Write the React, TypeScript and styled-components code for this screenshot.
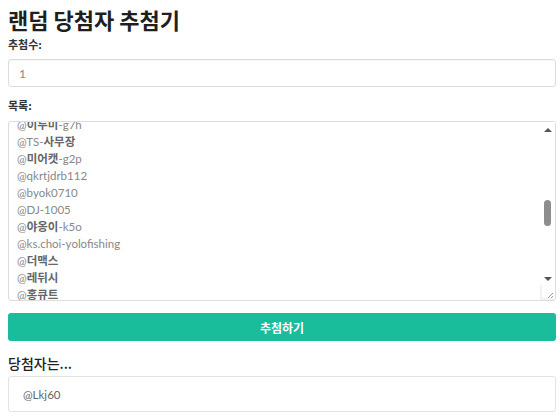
import React, { useEffect, useRef } from 'react';
import styled, { createGlobalStyle } from 'styled-components';

const GlobalStyle = createGlobalStyle`
    body {
        margin: 0;
        background: #fff;
        font-family: Lato, "Noto Sans CJK KR", sans-serif;
        color: #333;
    }
`;

const Page = styled.div`
    display: flex;
    flex-direction: column;
    padding: 6px 4px 0 8px;
`;

const Title = styled.h1`
    margin: 0;
    font-size: 22px;
    line-height: 26px;
    font-weight: 700;
    color: #1f1f1f;
    font-family: "Noto Sans CJK KR", sans-serif;
`;

const Label = styled.label<{ top: number }>`
    margin-top: ${(p) => p.top}px;
    font-size: 11px;
    line-height: 17px;
    font-weight: 700;
    color: #333;
    font-family: "Noto Sans CJK KR", sans-serif;
`;

const Input = styled.input`
    margin-top: 6px;
    height: 28px;
    box-sizing: border-box;
    border: 1px solid #ddd;
    border-radius: 3px;
    padding: 0 10px;
    font-family: Lato, "Noto Sans CJK KR", sans-serif;
    font-size: 12px;
    color: #888;
    box-shadow: inset 0 1px 1px rgba(0, 0, 0, 0.04);
    outline: none;
`;

const ListBox = styled.div`
    position: relative;
    margin-top: 7px;
    height: 180px;
    box-sizing: border-box;
    border: 1px solid #ddd;
    border-radius: 3px;
    display: flex;
`;

const List = styled.div`
    flex: 1;
    padding: 6px 8px;
    overflow: hidden;
    font-size: 11.5px;
    line-height: 17px;
    color: #888;
`;

const ScrollBar = styled.div`
    width: 15px;
    display: flex;
    flex-direction: column;
    align-items: center;
    background: #fff;
`;

const ArrowButton = styled.div<{ h: number }>`
    height: ${(p) => p.h}px;
    display: flex;
    align-items: center;
    justify-content: center;
`;

const Arrow = styled.div<{ down?: boolean }>`
    width: 0;
    height: 0;
    border-left: 4px solid transparent;
    border-right: 4px solid transparent;
    ${(p) => (p.down ? 'border-top' : 'border-bottom')}: 4px solid #555;
`;

const Track = styled.div`
    flex: 1;
    display: flex;
    flex-direction: column;
    align-items: center;
`;

const Thumb = styled.div<{ offset: number }>`
    margin-top: ${(p) => p.offset}px;
    width: 7px;
    height: 26px;
    border-radius: 4px;
    background: #8d8d8d;
`;

const Grip = styled.svg`
    width: 15px;
    height: 15px;
    display: block;
    flex-shrink: 0;
`;

const Line = styled.div`
    white-space: nowrap;
`;

const Kor = styled.span`
    font-family: "Noto Sans CJK KR", sans-serif;
    font-weight: 700;
    color: #666;
    font-size: 11.5px;
`;

const DrawButton = styled.button`
    margin-top: 12px;
    height: 28px;
    border: none;
    border-radius: 3px;
    background: #19bc9b;
    color: #fff;
    font-family: "Noto Sans CJK KR", sans-serif;
    font-weight: 700;
    font-size: 12px;
    cursor: pointer;
`;

const Subtitle = styled.h3`
    margin: 12px 0 0;
    font-size: 14px;
    line-height: 20px;
    font-weight: 500;
    color: #222;
    font-family: "Noto Sans CJK KR", sans-serif;
`;

const Result = styled.div`
    margin-top: 3px;
    height: 36px;
    box-sizing: border-box;
    border: 1px solid #e3e3e3;
    border-radius: 3px;
    padding: 0 14px;
    display: flex;
    align-items: center;
    font-size: 11.5px;
    color: #666;
`;

const names = [
    '@dlwogus12', '@하루-k2a', '@minsu_lee', '@코딩왕', '@sj.park', '@jhkim0301',
    '@별빛-q9x', '@dev-yoon', '@초코맛', '@hyun_ji', '@gamja22', '@ssong-dev',
    '@바람-t4m', '@leo.kang', '@moonlight7', '@한라봉', '@jwchoi', '@tae-0822',
    '@peach-lee', '@구름-a1b', '@kimchi99', '@sunny.s', '@해피', '@ys-jung',
    '@Lkj60', '@nari_k', '@이두미-g7h', '@TS-사무장', '@미어캣-g2p', '@qkrtjdrb112',
    '@byok0710', '@DJ-1005', '@야옹이-k5o', '@ks.choi-yolofishing', '@더맥스',
    '@레뒤시', '@홍큐트', '@jinwoo', '@토끼-z3k', '@cheolsu', '@mk.lee',
    '@happyday', '@여름-p5', '@sh_kim', '@dongdong', '@하늘-w7e', '@jay.oh',
    '@bori0505', '@밤톨', '@younghee', '@hj-han', '@cat_lover', '@봄봄-r2',
    '@wonjun', '@ej.seo', '@pink-d', '@단비', '@minji_k', '@run-88', '@ohno7',
    '@감자칩', '@yjchoi',
];

const renderName = (name: string) =>
    name.split(/([가-힣]+)/).map((part, i) =>
        /[가-힣]/.test(part) ? <Kor key={i}>{part}</Kor> : <span key={i}>{part}</span>
    );

const App = () => {
    const listRef = useRef<HTMLDivElement>(null);

    useEffect(() => {
        if (listRef.current) {
            listRef.current.scrollTop = 26 * 17 + 12;
        }
    }, []);

    return (
        <Page>
            <GlobalStyle />
            <Title>랜덤 당첨자 추첨기</Title>
            <Label top={4}>추첨수:</Label>
            <Input defaultValue="1" />
            <Label top={10}>목록:</Label>
            <ListBox>
                <List ref={listRef}>
                    {names.map((name) => (
                        <Line key={name}>{renderName(name)}</Line>
                    ))}
                </List>
                <ScrollBar>
                    <ArrowButton h={16}>
                        <Arrow />
                    </ArrowButton>
                    <Track>
                        <Thumb offset={62} />
                    </Track>
                    <ArrowButton h={12}>
                        <Arrow down />
                    </ArrowButton>
                    <Grip viewBox="0 0 15 15">
                        <path d="M1 0V14H15" fill="none" stroke="#e4e4e4" strokeWidth="1" />
                        <path d="M13 8L8 13M13 11L11 13" stroke="#9a9a9a" strokeWidth="1" />
                    </Grip>
                </ScrollBar>
            </ListBox>
            <DrawButton>추첨하기</DrawButton>
            <Subtitle>당첨자는...</Subtitle>
            <Result>@Lkj60</Result>
        </Page>
    );
};

export default App;
